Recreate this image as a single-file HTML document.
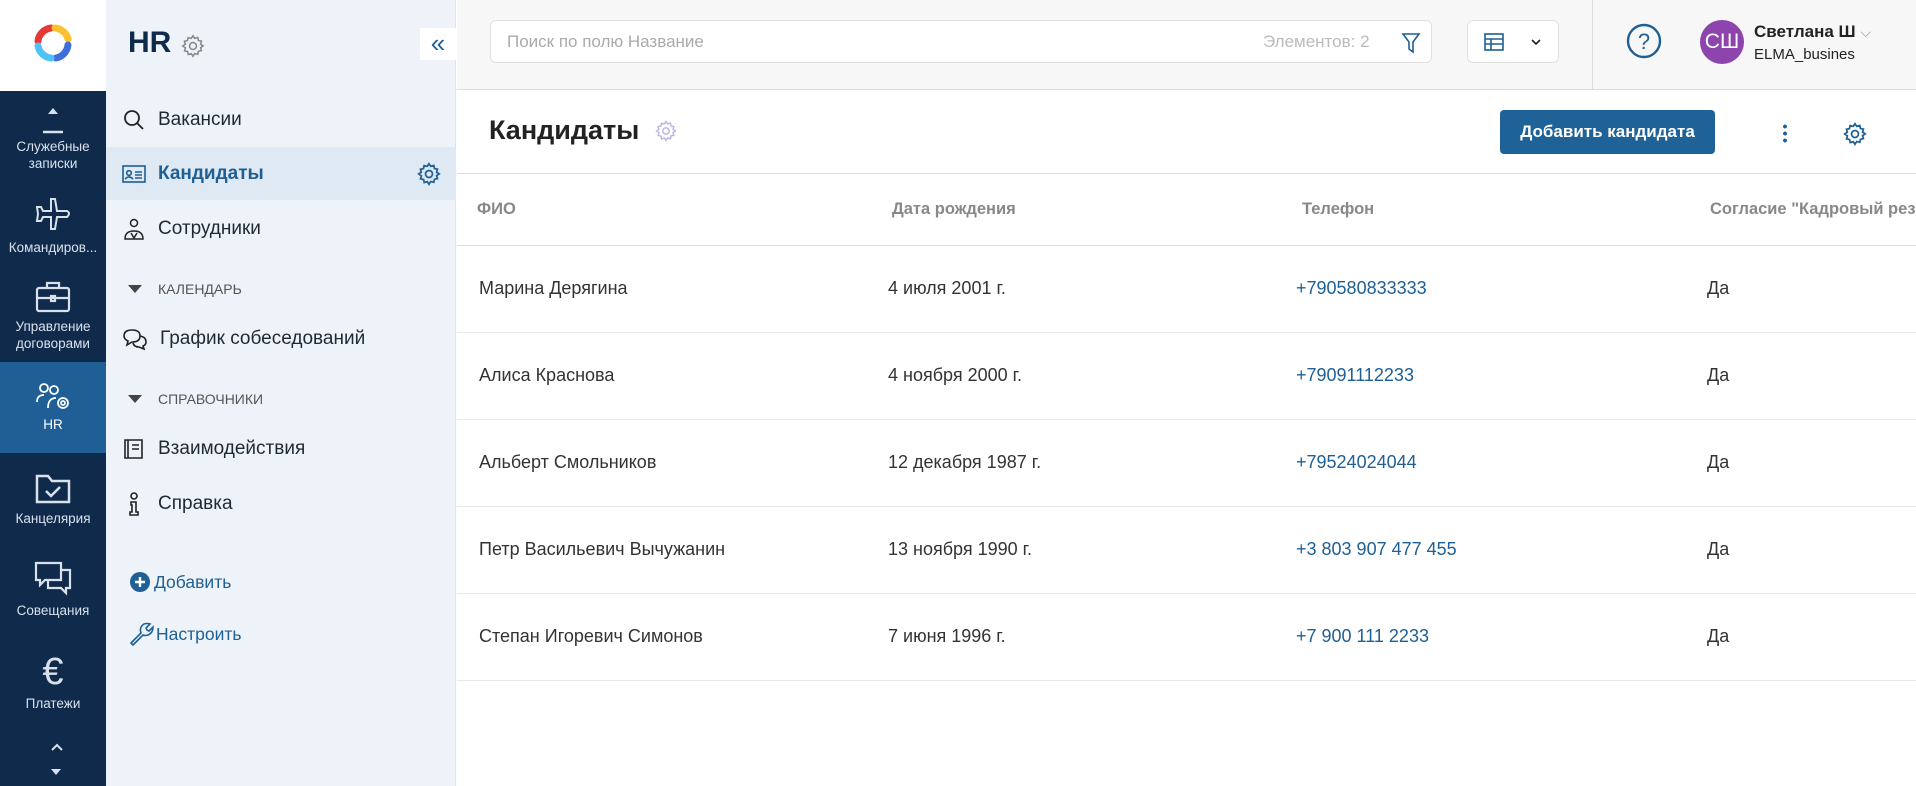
<!DOCTYPE html>
<html><head><meta charset="utf-8"><style>
*{box-sizing:border-box;margin:0;padding:0}
body{width:1916px;height:786px;overflow:hidden;font-family:"Liberation Sans","Noto Sans CJK SC",sans-serif;background:#fff;position:relative}
.abs{position:absolute}
#rail{left:0;top:0;width:106px;height:786px;background:#0f2a4a}
#logo{left:0;top:0;width:106px;height:91px;background:#fff}
.ri{position:absolute;left:0;width:106px;text-align:center;color:#d9e2ec;font-size:13.5px;line-height:17px}
.ri svg{display:block;margin:0 auto 4px}
#side{left:106px;top:0;width:350px;height:786px;background:#eef3f9;border-right:1px solid #dde3ea}
.mi{position:absolute;left:16px;font-size:19px;color:#1f2933;display:flex;align-items:center;height:30px}
.mi svg{margin-right:12px}
.sec{position:absolute;left:22px;font-size:14px;color:#555;display:flex;align-items:center}
.sec i{width:0;height:0;border-left:7px solid transparent;border-right:7px solid transparent;border-top:8px solid #444;margin-right:16px}
#top{left:457px;top:0;width:1459px;height:90px;background:#f7f7f7;border-bottom:1px solid #ddd}
.th{position:absolute;top:200px;font-size:16.5px;color:#888;font-weight:bold}
.row{position:absolute;left:457px;width:1459px;height:87px;border-bottom:1px solid #e8e8e8}
.row span{position:absolute;top:32px;font-size:18px;color:#333}
.row .p{color:#1e5f96}
</style></head><body>
<div id="rail" class="abs"></div>
<div id="logo" class="abs">
<svg class="abs" style="left:30px;top:20px" width="46" height="46" viewBox="0 0 46 46" fill="none" stroke-width="7" stroke-linecap="round"><path d="M8 21 A15 15 0 0 1 21 8" stroke="#e53935"/><path d="M25 8 A15 15 0 0 1 38 19" stroke="#fbc02d"/><path d="M38 25 A15 15 0 0 1 26 38" stroke="#3f6fd8"/><path d="M21 38 A15 15 0 0 1 8 26" stroke="#4fc3f7"/></svg>
</div>
<div class="ri" style="top:104px"><svg width="30" height="30" viewBox="0 0 30 30"><path d="M10 10 L15 4 L20 10Z" fill="#d9e2ec"/><path d="M5 28 H25" stroke="#d9e2ec" stroke-width="2.5"/></svg>Служебные<br>записки</div>
<div class="ri" style="top:195px"><svg width="40" height="40" viewBox="0 0 40 40" fill="none" stroke="#d9e2ec" stroke-width="2"><path d="M18 4 L22 4 L24 16 L34 16 Q38 18 34 22 L24 22 L22 34 L18 34 L18 22 L10 22 L8 26 L4 26 L5 19 L4 12 L8 12 L10 16 L18 16Z"/></svg>Командиров...</div>
<div class="ri" style="top:280px"><svg width="40" height="34" viewBox="0 0 40 34" fill="none" stroke="#d9e2ec" stroke-width="2.2"><rect x="4" y="8" width="32" height="23" rx="2"/><path d="M14 8 V3 H26 V8 M4 18 H36"/><rect x="18" y="16" width="4" height="5"/></svg>Управление<br>договорами</div>
<div class="abs" style="left:0;top:362px;width:106px;height:91px;background:#1f5f96"></div>
<div class="ri" style="top:382px;color:#fff"><svg width="38" height="30" viewBox="0 0 38 30" fill="none" stroke="#fff" stroke-width="1.8"><circle cx="10" cy="6" r="4"/><circle cx="20" cy="8" r="4"/><path d="M3 20 Q3 13 10 13 M14 26 Q14 16 22 16"/><circle cx="29" cy="21" r="5"/><circle cx="29" cy="21" r="2"/></svg>HR</div>
<div class="ri" style="top:472px"><svg width="40" height="34" viewBox="0 0 40 34" fill="none" stroke="#d9e2ec" stroke-width="2.5"><path d="M4 4 H15 L19 9 H36 V30 H4Z"/><path d="M13 19 L18 24 L27 15"/></svg>Канцелярия</div>
<div class="ri" style="top:560px"><svg width="40" height="38" viewBox="0 0 40 38" fill="none" stroke="#d9e2ec" stroke-width="2.2"><path d="M3 3 H28 V20 H12 L7 25 V20 H3Z"/><path d="M28 10 H37 V28 H33 V33 L28 28 H15 V20"/></svg>Совещания</div>
<div class="ri" style="top:653px"><div style="font-size:38px;line-height:38px;margin-bottom:4px">€</div>Платежи</div>
<svg class="abs" style="left:46px;top:740px" width="20" height="40" viewBox="0 0 20 40"><path d="M6 10 L11 5 L16 10" stroke="#d9e2ec" stroke-width="2" fill="none"/><path d="M5 29 H15 L10 35Z" fill="#d9e2ec"/></svg>

<div id="side" class="abs">
<div class="abs" style="left:22px;top:26px;font-size:30px;font-weight:bold;color:#0f2a4a">HR</div>
<svg class="abs" style="left:74px;top:33px" width="26" height="26" viewBox="0 0 24 24" fill="none" stroke="#888" stroke-width="1.4"><circle cx="12" cy="12" r="3.2"/><path d="M12 2.5l1.6 2.4 2.8-.8.6 2.8 2.8.6-.8 2.8 2.4 1.6-2.4 1.6.8 2.8-2.8.6-.6 2.8-2.8-.8L12 21.5l-1.6-2.4-2.8.8-.6-2.8-2.8-.6.8-2.8L2.5 12l2.4-1.6-.8-2.8 2.8-.6.6-2.8 2.8.8z"/></svg>
<div class="abs" style="left:314px;top:28px;width:36px;height:32px;background:#fff;color:#1e5f96;font-size:26px;text-align:center;line-height:30px">«</div>
<div class="mi" style="top:105px"><svg width="24" height="24" viewBox="0 0 24 24" fill="none" stroke="#222" stroke-width="1.8"><circle cx="10" cy="10" r="7"/><path d="M15 15 L21 21"/></svg>Вакансии</div>
<div class="abs" style="left:0;top:147px;width:350px;height:53px;background:#dfe9f3"></div>
<div class="mi" style="top:159px;color:#1e5f96;font-weight:bold"><svg width="24" height="20" viewBox="0 0 24 20" fill="none" stroke="#1e5f96" stroke-width="1.6"><rect x="1" y="2" width="22" height="16"/><circle cx="7" cy="9" r="2.3"/><path d="M3 15 Q7 11 11 15 M13 8 H20 M13 11 H20 M13 14 H20"/></svg>Кандидаты</div>
<svg class="abs" style="left:310px;top:161px" width="26" height="26" viewBox="0 0 24 24" fill="none" stroke="#1e5f96" stroke-width="1.6"><circle cx="12" cy="12" r="3.2"/><path d="M12 2.5l1.6 2.4 2.8-.8.6 2.8 2.8.6-.8 2.8 2.4 1.6-2.4 1.6.8 2.8-2.8.6-.6 2.8-2.8-.8L12 21.5l-1.6-2.4-2.8.8-.6-2.8-2.8-.6.8-2.8L2.5 12l2.4-1.6-.8-2.8 2.8-.6.6-2.8 2.8.8z"/></svg>
<div class="mi" style="top:214px"><svg width="24" height="24" viewBox="0 0 24 24" fill="none" stroke="#222" stroke-width="1.5"><circle cx="12" cy="6" r="3.5"/><path d="M3 22 Q3 14 12 14 Q21 14 21 22Z M9 16 L12 21 L15 16"/></svg>Сотрудники</div>
<div class="sec" style="top:281px"><i></i>КАЛЕНДАРЬ</div>
<div class="mi" style="top:324px"><svg width="26" height="24" viewBox="0 0 26 24" fill="none" stroke="#222" stroke-width="1.6"><path d="M2 9 Q2 3 10 3 Q18 3 18 9 Q18 15 10 15 L5 18 L6 14 Q2 12 2 9Z M18 9 Q24 10 24 15 Q24 18 21 19 L22 22 L17 20 Q12 20 11 16"/></svg>График собеседований</div>
<div class="sec" style="top:391px"><i></i>СПРАВОЧНИКИ</div>
<div class="mi" style="top:434px"><svg width="24" height="24" viewBox="0 0 24 24" fill="none" stroke="#222" stroke-width="1.6"><path d="M3 21 V3 H20 V21Z M6 3 V21 M10 8 H17 M10 12 H17"/></svg>Взаимодействия</div>
<div class="mi" style="top:489px"><svg width="24" height="26" viewBox="0 0 24 26" fill="none" stroke="#222" stroke-width="1.6"><circle cx="12" cy="5" r="3"/><path d="M9 11 H14 V21 H16 V24 H8 V21 H10 V14 H9Z"/></svg>Справка</div>
<div class="mi" style="top:567px;left:24px;color:#1e5f96;font-size:17.5px"><svg width="20" height="20" viewBox="0 0 20 20" style="margin-right:4px"><circle cx="10" cy="10" r="10" fill="#1e5f96"/><path d="M10 5 V15 M5 10 H15" stroke="#fff" stroke-width="2.4"/></svg>Добавить</div>
<div class="mi" style="top:619px;left:22px;color:#1e5f96;font-size:17.5px"><svg width="26" height="26" viewBox="0 0 26 26" fill="none" stroke="#1e5f96" stroke-width="1.6" style="margin-right:2px"><path d="M3 22 L13 12 Q11 6 16 3 Q19 2 22 3 L18 7 L19 9 L21 10 L25 6 Q25 12 20 14 Q17 15 15 14 L5 24 Z"/></svg>Настроить</div>
</div>

<div id="top" class="abs">
<div class="abs" style="left:33px;top:20px;width:942px;height:43px;background:#fff;border:1px solid #e0e0e0;border-radius:6px">
<span class="abs" style="left:16px;top:11px;font-size:17px;color:#aaa">Поиск по полю Название</span>
<span class="abs" style="left:772px;top:11px;font-size:17px;color:#bbb">Элементов: 2</span>
<svg class="abs" style="left:910px;top:11px" width="20" height="22" viewBox="0 0 20 22" fill="none" stroke="#1e5f96" stroke-width="1.6"><path d="M2 2 H18 L12 10 V20 L8 17 V10Z"/></svg>
</div>
<div class="abs" style="left:1010px;top:20px;width:92px;height:43px;background:#fff;border:1px solid #e0e0e0;border-radius:6px">
<svg class="abs" style="left:16px;top:12px" width="20" height="18" viewBox="0 0 20 18" fill="none" stroke="#1e5f96" stroke-width="1.6"><rect x="1" y="1" width="18" height="16"/><path d="M1 6 H19 M1 11 H19 M7 6 V17"/></svg>
<svg class="abs" style="left:62px;top:17px" width="12" height="8" viewBox="0 0 12 8"><path d="M2 2 L6 6 L10 2" stroke="#222" stroke-width="1.6" fill="none"/></svg>
</div>
<div class="abs" style="left:1135px;top:0;width:1px;height:90px;background:#ddd"></div>
<svg class="abs" style="left:1168px;top:22px" width="38" height="38" viewBox="0 0 38 38"><circle cx="19" cy="19" r="16" fill="none" stroke="#1e5f96" stroke-width="2.4"/><text x="19" y="27" font-size="22" text-anchor="middle" fill="#1e5f96" font-family="Liberation Sans">?</text></svg>
<div class="abs" style="left:1243px;top:20px;width:44px;height:44px;border-radius:50%;background:#8e44ad;color:#fff;font-size:21px;text-align:center;line-height:44px">СШ</div>
<div class="abs" style="left:1297px;top:22px;font-size:17px;font-weight:bold;color:#222">Светлана Ш <span style="color:#999;font-weight:normal;font-size:14px">⌵</span></div>
<div class="abs" style="left:1297px;top:46px;font-size:15px;color:#222">ELMA_busines</div>
</div>

<div class="abs" style="left:489px;top:115px;font-size:27px;font-weight:bold;color:#222">Кандидаты</div>
<svg class="abs" style="left:654px;top:119px" width="24" height="24" viewBox="0 0 24 24" fill="none" stroke="#b9b3e0" stroke-width="1.4"><circle cx="12" cy="12" r="3.2"/><path d="M12 2.5l1.6 2.4 2.8-.8.6 2.8 2.8.6-.8 2.8 2.4 1.6-2.4 1.6.8 2.8-2.8.6-.6 2.8-2.8-.8L12 21.5l-1.6-2.4-2.8.8-.6-2.8-2.8-.6.8-2.8L2.5 12l2.4-1.6-.8-2.8 2.8-.6.6-2.8 2.8.8z"/></svg>
<div class="abs" style="left:1500px;top:110px;width:215px;height:44px;background:#1f6298;border-radius:4px;color:#fff;font-size:17px;font-weight:bold;text-align:center;line-height:44px">Добавить кандидата</div>
<div class="abs" style="left:1783px;top:123px;width:4px;height:20px;background:radial-gradient(circle,#1e5f96 1.8px,transparent 2px) 0 0/4px 7px"></div>
<svg class="abs" style="left:1842px;top:121px" width="26" height="26" viewBox="0 0 24 24" fill="none" stroke="#1e5f96" stroke-width="1.6"><circle cx="12" cy="12" r="3.2"/><path d="M12 2.5l1.6 2.4 2.8-.8.6 2.8 2.8.6-.8 2.8 2.4 1.6-2.4 1.6.8 2.8-2.8.6-.6 2.8-2.8-.8L12 21.5l-1.6-2.4-2.8.8-.6-2.8-2.8-.6.8-2.8L2.5 12l2.4-1.6-.8-2.8 2.8-.6.6-2.8 2.8.8z"/></svg>
<div class="abs" style="left:457px;top:173px;width:1459px;height:1px;background:#ddd"></div>
<div class="th" style="left:477px">ФИО</div>
<div class="th" style="left:892px">Дата рождения</div>
<div class="th" style="left:1302px">Телефон</div>
<div class="th" style="left:1710px;white-space:nowrap">Согласие "Кадровый резерв"</div>
<div class="abs" style="left:457px;top:245px;width:1459px;height:1px;background:#ddd"></div>
<div class="row" style="top:246px"><span style="left:22px">Марина Дерягина</span><span style="left:431px">4 июля 2001 г.</span><span class="p" style="left:839px">+790580833333</span><span style="left:1250px">Да</span></div>
<div class="row" style="top:333px"><span style="left:22px">Алиса Краснова</span><span style="left:431px">4 ноября 2000 г.</span><span class="p" style="left:839px">+79091112233</span><span style="left:1250px">Да</span></div>
<div class="row" style="top:420px"><span style="left:22px">Альберт Смольников</span><span style="left:431px">12 декабря 1987 г.</span><span class="p" style="left:839px">+79524024044</span><span style="left:1250px">Да</span></div>
<div class="row" style="top:507px"><span style="left:22px">Петр Васильевич Вычужанин</span><span style="left:431px">13 ноября 1990 г.</span><span class="p" style="left:839px">+3 803 907 477 455</span><span style="left:1250px">Да</span></div>
<div class="row" style="top:594px"><span style="left:22px">Степан Игоревич Симонов</span><span style="left:431px">7 июня 1996 г.</span><span class="p" style="left:839px">+7 900 111 2233</span><span style="left:1250px">Да</span></div>
</body></html>
